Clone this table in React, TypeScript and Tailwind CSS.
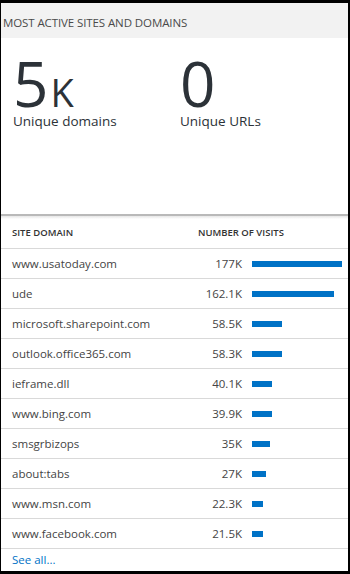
import React from 'react';

const rows = [
  { domain: 'www.usatoday.com', label: '177K', value: 177 },
  { domain: 'ude', label: '162.1K', value: 162.1 },
  { domain: 'microsoft.sharepoint.com', label: '58.5K', value: 58.5 },
  { domain: 'outlook.office365.com', label: '58.3K', value: 58.3 },
  { domain: 'ieframe.dll', label: '40.1K', value: 40.1 },
  { domain: 'www.bing.com', label: '39.9K', value: 39.9 },
  { domain: 'smsgrbizops', label: '35K', value: 35 },
  { domain: 'about:tabs', label: '27K', value: 27 },
  { domain: 'www.msn.com', label: '22.3K', value: 22.3 },
  { domain: 'www.facebook.com', label: '21.5K', value: 21.5 },
];

const MAX = 177;
const BAR_MAX = 90;

export default function App() {
  return (
    <div className="w-[350px] h-[574px] bg-black pt-[3px] pl-[1px] pr-[2px] pb-[3px] font-['Open_Sans',sans-serif]">
      <div className="flex h-full flex-col bg-white">
        {/* title bar */}
        <div className="flex h-[35px] items-center bg-[#f2f2f2] pl-[2px] pt-[5px] text-[11.5px] uppercase tracking-[-0.1px] text-[#4a4a4a]">
          Most active sites and domains
        </div>

        {/* stats */}
        <div className="flex h-[176px] pl-[12px] pt-[19px] text-[#2c3238]">
          <div className="flex w-[167px] flex-col">
            <div className="flex h-[52px] items-baseline">
              <span className="text-[62px] font-medium leading-[52px]">5</span>
              <span className="ml-[2px] text-[38px] font-medium leading-[52px]">K</span>
            </div>
            <span className="mt-[3px] text-[13.5px] leading-[18px]">Unique domains</span>
          </div>
          <div className="flex flex-col">
            <span className="h-[52px] text-[62px] font-medium leading-[52px]">0</span>
            <span className="mt-[3px] text-[13.5px] leading-[18px]">Unique URLs</span>
          </div>
        </div>

        {/* divider */}
        <div className="h-[2px] bg-[#b9b9b9]" />
        <div className="h-[3px] bg-gradient-to-b from-[#e6e6e6] to-white" />

        {/* table header */}
        <div className="flex h-[29px] items-center text-[9.5px] font-semibold uppercase text-[#333]">
          <span className="w-[197px] pl-[11px]">Site domain</span>
          <span>Number of visits</span>
        </div>

        {/* rows */}
        {rows.map((r) => (
          <div key={r.domain} className="flex h-[30px] items-center border-t border-[#d9d9d9] text-[11.5px] text-[#444]">
            <span className="w-[186px] pl-[11px]">{r.domain}</span>
            <span className="w-[55px] text-right">{r.label}</span>
            <div className="ml-[10px] flex w-[90px] items-center">
              <div className="h-[6px] bg-[#0072c6]" style={{ width: Math.round((r.value / MAX) * BAR_MAX) }} />
            </div>
          </div>
        ))}

        {/* footer */}
        <div className="flex flex-1 items-center border-t border-[#d9d9d9] pl-[11px] text-[11.5px] text-[#0072c6]">
          See all...
        </div>
      </div>
    </div>
  );
}
